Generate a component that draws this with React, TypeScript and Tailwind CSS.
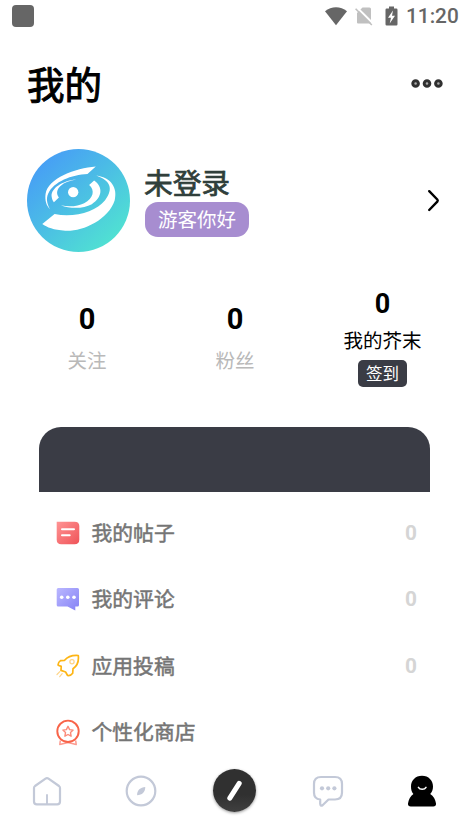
import type { ReactNode } from "react";

function StatusBar() {
  return (
    <header className="flex h-8 items-center justify-between pl-3 pr-[10px] text-[#666666]">
      <div className="h-[22px] w-[22px] rounded-[4px] bg-[#666666]" />
      <div className="flex h-8 items-center">
        <svg width="22" height="19" viewBox="0 0 22 19" fill="currentColor">
          <path d="M0 4.2C6.5-1 15.5-1 22 4.2L11 18.3Z" />
        </svg>
        <svg className="ml-[8px]" width="18" height="20" viewBox="0 0 18 20">
          <path d="M7.5 1.5H14.5Q16 1.5 16 3V17.5H3Q2 17.5 2 16.5V7Z" fill="#c0c0c0" />
          <path d="M2 1.5L18 17.5" stroke="#fff" strokeWidth="2" />
          <path d="M.6 2.8L16.8 19" stroke="#c0c0c0" strokeWidth="1.6" />
        </svg>
        <svg className="ml-[12px]" width="13" height="20" viewBox="0 0 13 20">
          <path d="M4 .5H9V2.5H11.3Q12.5 2.5 12.5 3.7V18.3Q12.5 19.5 11.3 19.5H1.7Q.5 19.5.5 18.3V3.7Q.5 2.5 1.7 2.5H4Z" fill="currentColor" />
          <path d="M8 4.5L3 11.8H6L4.7 17.5L10 9.7H7Z" fill="#fff" />
        </svg>
        <span className="ml-[8px] w-[53px] whitespace-nowrap font-[Roboto] text-[20.8px] font-medium leading-8">11:20</span>
      </div>
    </header>
  );
}

function Avatar() {
  return (
    <svg className="shrink-0" width="103" height="103" viewBox="35 26 310 310">
      <defs>
        <linearGradient id="avatar" x1="0.15" y1="0.12" x2="0.85" y2="0.88">
          <stop stopColor="#479ff5" />
          <stop offset="1" stopColor="#50e1d2" />
        </linearGradient>
      </defs>
      <circle cx="190" cy="181" r="155" fill="url(#avatar)" />
      <g fill="#fff">
        <path d="M242 79C180 84 98 115 91 161C88 181 94 198 104 207C95 190 92 175 99 160C115 124 170 103 217 101Z" />
        <path d="M81 252L118 222C180 234 242 214 270 180C297 145 285 120 243 106C290 112 308 145 299 180C280 240 200 275 150 272C115 270 95 262 81 252Z" />
        <path d="M183 118C140 122 108 145 109 168C110 177 113 183 116 186L131 172C122 160 125 148 135 138C148 126 165 121 183 118Z" />
        <path d="M237 121L222 134C240 150 236 173 207 189C188 199 160 201 137 195C165 206 205 206 230 192C262 172 265 140 237 121Z" />
        <circle cx="174" cy="156" r="15.5" />
      </g>
    </svg>
  );
}

function PostIcon() {
  return (
    <svg width="24" height="24" viewBox="0 0 24 24">
      <defs>
        <linearGradient id="post" x1="0" y1="0" x2="1" y2="1">
          <stop stopColor="#ff9494" />
          <stop offset="1" stopColor="#ef5358" />
        </linearGradient>
      </defs>
      <path d="M.7.7H18.5Q23.3.7 23.3 5V18.5Q23.3 23.3 18.5 23.3H5.2Q.7 23.3.7 18.5Z" fill="url(#post)" />
      <path d="M6 8.3H18M6 14.3H13.7" stroke="#fff" strokeWidth="2" strokeLinecap="round" />
    </svg>
  );
}

function CommentIcon() {
  return (
    <svg width="24" height="24" viewBox="0 0 24 24">
      <defs>
        <linearGradient id="comment" x1="0" y1="0" x2="1" y2="1">
          <stop stopColor="#bab7ff" />
          <stop offset="1" stopColor="#8582f5" />
        </linearGradient>
      </defs>
      <path d="M2.2 1H21.5Q23 1 23 2.5V18Q23 19.5 21.5 19.5H19.3V23.5L11.5 19.5H2.2Q.7 19.5.7 18V2.5Q.7 1 2.2 1Z" fill="url(#comment)" />
      <g fill="#fff">
        <circle cx="5.7" cy="10.2" r="1.8" />
        <circle cx="11.8" cy="10.2" r="1.8" />
        <circle cx="18" cy="10.2" r="1.8" />
      </g>
    </svg>
  );
}

function RocketIcon() {
  return (
    <svg width="24" height="24" viewBox="0 0 24 24" fill="none" stroke="#fdb515" strokeWidth="1.7" strokeLinejoin="round" strokeLinecap="round">
      <path d="M22.3 1.5C16 1 11.5 2.8 8.6 6.3L4.5 6.7Q1.6 9 2.2 11.2L5.2 12.4L5 16.4L9.6 18L11.6 21.5Q14.6 22 16.7 19.2L17 14.8C21.3 11.8 23 7.6 22.3 1.5Z" />
      <circle cx="16" cy="7.8" r="2.1" stroke="#fed58a" strokeWidth="1.3" />
      <path d="M3.8 17.7L1 20.5M6.2 19.7L3.7 22.7" stroke="#fed58a" strokeWidth="1.2" />
    </svg>
  );
}

function MedalIcon() {
  return (
    <svg width="24" height="27" viewBox="0 0 24 27" fill="none" stroke="#f86449" strokeLinejoin="round">
      <path d="M4.3 21.5L3.8 25.5L12 23.6L20.2 25.5L19.7 21.5" stroke="#fc9b90" strokeWidth="1.5" />
      <circle cx="12" cy="12.3" r="10.7" strokeWidth="1.9" />
      <path d="M12 7.3L13.6 10.6L17.1 11.1L14.5 13.6L15.1 17.2L12 15.5L8.9 17.2L9.5 13.6L6.9 11.1L10.4 10.6Z" stroke="#fb8a79" strokeWidth="1.4" />
    </svg>
  );
}

function Stat({ label }: { label: string }) {
  return (
    <div className="flex w-[148px] flex-col items-center">
      <span className="font-[Roboto] text-[29px] font-bold leading-[34px] text-black">0</span>
      <span className="mt-[10px] text-[19.5px] leading-7 text-[#b9b9b9]">{label}</span>
    </div>
  );
}

function MenuRow({ icon, label, count }: { icon: ReactNode; label: string; count?: number }) {
  return (
    <li className="flex h-[66.3px] items-center pl-[17px] pr-[13px]">
      <span className="flex w-6 justify-center">{icon}</span>
      <span className="ml-[11.5px] pb-[2px] text-[20.8px] leading-7 text-[#757575] [-webkit-text-stroke:0.5px_#757575]">{label}</span>
      {count !== undefined && (
        <span className="ml-auto font-[Roboto] text-[20.8px] font-bold leading-7 text-[#d5d5d5]">{count}</span>
      )}
    </li>
  );
}

function TabBar() {
  return (
    <nav className="flex h-[85px] shrink-0 justify-around bg-white pt-[20.5px]">
      <button className="flex h-11 w-[94px] items-center justify-center">
        <svg width="30" height="30" viewBox="0 0 30 30" fill="none" stroke="#c3c9d8" strokeWidth="2.2" strokeLinecap="round" strokeLinejoin="round">
          <path d="M2 12Q2 10.8 3 10L13.5 2.6Q15 1.5 16.5 2.6L27 10Q28 10.8 28 12V25.5Q28 28.3 25.2 28.3H4.8Q2 28.3 2 25.5Z" />
          <path d="M15 19V28" strokeWidth="1.9" />
        </svg>
      </button>
      <button className="flex h-11 w-[94px] items-center justify-center">
        <svg width="32" height="32" viewBox="0 0 32 32">
          <circle cx="16" cy="16" r="14.3" fill="none" stroke="#c3c9d8" strokeWidth="2.2" />
          <path d="M20.3 12C15.5 12.2 11.8 15.3 12.1 20.2C17.1 20.2 20.2 17 20.3 12Z" fill="#c3c9d8" />
        </svg>
      </button>
      <button className="flex h-11 w-[94px] items-center justify-center">
        <span className="flex h-[43px] w-[43px] items-center justify-center rounded-full bg-linear-to-b from-[#303030] from-60% to-[#404040] shadow-[0_1px_3px_rgba(0,0,0,0.4)]">
          <svg width="43" height="43" viewBox="0 0 43 43">
            <path d="M26.2 14.3L16.8 29.2" stroke="#fff" strokeWidth="5" strokeLinecap="round" />
          </svg>
        </span>
      </button>
      <button className="flex h-11 w-[94px] items-center justify-center">
        <svg width="32" height="32" viewBox="0 0 32 32" fill="none" stroke="#c3c9d8" strokeWidth="2.2" strokeLinejoin="round">
          <path d="M9 2H23Q30 2 30 9V17.5Q30 24.5 23 24.5H16.5L10.8 30Q8.5 31.7 8.2 29V24.5Q2 24 2 17.5V9Q2 2 9 2Z" />
          <g fill="#c3c9d8" stroke="none">
            <circle cx="10" cy="13.3" r="2.1" />
            <circle cx="16.2" cy="13.3" r="2.1" />
            <circle cx="22.4" cy="13.3" r="2.1" />
          </g>
        </svg>
      </button>
      <button className="flex h-11 w-[94px] items-center justify-center">
        <svg width="28" height="32" viewBox="0 0 28 32">
          <path d="M14 .7C20.7.7 25 5.5 25 11.5C25 14.8 24 17 22.2 19C25.5 21 27.5 24.6 28 28.5Q28.3 31.5 25.4 31.5H2.6Q-.3 31.5 0 28.5C.5 24.6 2.5 21 5.4 19C3.7 17 3 14.8 3 11.5C3 5.5 7.3.7 14 .7Z" />
          <path d="M10.4 12.4C11.8 15 16.6 15 18 12.4" fill="none" stroke="#fff" strokeWidth="1.5" strokeLinecap="round" />
        </svg>
      </button>
    </nav>
  );
}

export default function App() {
  return (
    <main className="flex h-[833px] w-[469px] flex-col overflow-hidden bg-white font-['Noto_Sans_CJK_SC',sans-serif]">
      <StatusBar />

      {/* Page title */}
      <section className="flex h-[104px] items-center justify-between pl-[27px] pr-[26px]">
        <h1 className="pb-[3px] text-[37.5px] leading-[50px] text-black [-webkit-text-stroke:1px_#000]">我的</h1>
        <svg width="32" height="10" viewBox="0 0 32 10" fill="#aaa" stroke="#303030" strokeWidth="3">
          <circle cx="4.6" cy="4.5" r="2.8" />
          <circle cx="16" cy="4.5" r="2.8" />
          <circle cx="27.4" cy="4.5" r="2.8" />
        </svg>
      </section>

      {/* Profile */}
      <section className="flex h-[129px] items-center pl-[27px] pr-[29px]">
        <Avatar />
        <div className="ml-[14px] flex flex-col items-start">
          <h2 className="-mt-[2px] mb-px text-[28.7px] leading-[38px] text-[#303f3b] [-webkit-text-stroke:0.75px_#303f3b]">未登录</h2>
          <span className="ml-px flex h-[35px] w-[104px] items-center justify-center rounded-[13px] bg-[#a78dd0] text-[19.5px] text-white">游客你好</span>
        </div>
        <svg className="ml-auto" width="13" height="24" viewBox="0 0 13 24" fill="none" stroke="#000" strokeWidth="2.4" strokeLinecap="round" strokeLinejoin="round">
          <path d="M2.2 2.2L10.3 10.5Q11.2 11.6 10.3 12.7L2.2 21" />
        </svg>
      </section>

      {/* Counters */}
      <section className="flex h-[162px] items-start justify-center pt-[37px]">
        <Stat label="关注" />
        <Stat label="粉丝" />
        <div className="-mt-[15px] flex w-[147px] flex-col items-center">
          <span className="font-[Roboto] text-[27px] font-bold leading-[34px] text-black">0</span>
          <span className="mt-[5px] text-[19.5px] leading-7 text-black">我的芥末</span>
          <span className="mt-[6px] flex h-[27px] w-[49px] items-center justify-center rounded-[5px] bg-[#3a3c45] text-[16.5px] leading-[27px] text-white">签到</span>
        </div>
      </section>

      {/* Menu */}
      <section className="mx-[39px] min-h-0 flex-1 overflow-hidden">
        <div className="h-[65px] rounded-t-[22px] bg-[#3a3c45]" />
        <ul className="pt-[8px]">
          <MenuRow icon={<PostIcon />} label="我的帖子" count={0} />
          <MenuRow icon={<CommentIcon />} label="我的评论" count={0} />
          <MenuRow icon={<RocketIcon />} label="应用投稿" count={0} />
          <MenuRow icon={<MedalIcon />} label="个性化商店" />
        </ul>
      </section>

      <TabBar />
    </main>
  );
}
